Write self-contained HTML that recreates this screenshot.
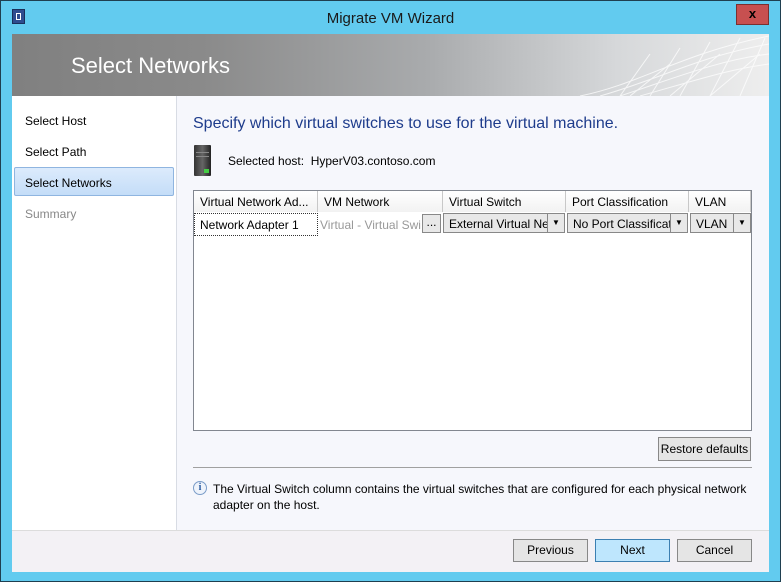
<!DOCTYPE html><html><head><style>
*{margin:0;padding:0;box-sizing:border-box}
body{width:781px;height:582px;background:#62cbef;font-family:"Liberation Sans",sans-serif;font-size:12px;color:#000;position:relative;overflow:hidden}
.a{position:absolute}
.hdr{left:12px;top:34px;width:757px;height:62px;background:linear-gradient(90deg,#808080 0%,#8a8a8a 25%,#a9abad 55%,#d6d8da 80%,#eeeeee 100%)}
.nav div{position:absolute;left:13px;font-size:12px}
.th{position:absolute;top:0;height:21px;border-right:1px solid #c8c8c8;padding:4px 6px;background:linear-gradient(#fff,#f2f2f2);white-space:nowrap;overflow:hidden}
.cb{position:absolute;top:2px;height:20px;border:1px solid #888;background:#e8e8e8;padding:3px 5px;white-space:nowrap;overflow:hidden}
.dd{position:absolute;right:0;top:0;width:17px;height:18px;border-left:1px solid #888;background:#e8e8e8;font-size:8px;text-align:center;line-height:18px}
.btn{position:absolute;top:539px;height:23px;width:75px;border:1px solid #888;background:#e5e5e5;text-align:center;line-height:21px}
</style></head><body>
<div class="a" style="left:0;top:0;width:781px;height:582px;border:1px solid #1f3f50"></div>
<div class="a" style="left:12px;top:9px;width:13px;height:15px;background:#2e4d8f;border:1px solid #1a2f5a"><div style="margin:3px 3px;width:5px;height:7px;border:1px solid #fff"></div></div>
<div class="a" style="left:0;top:10px;width:781px;text-align:center;font-size:15px;color:#1a1a1a">Migrate VM Wizard</div>
<div class="a" style="left:736px;top:4px;width:33px;height:21px;background:#c75050;border:1px solid #7a3030;color:#000;font-weight:bold;text-align:center;line-height:18px;font-size:13px">x</div>
<div class="a hdr"></div>
<svg class="a" style="left:560px;top:34px" width="209" height="62"><g stroke="#fff" stroke-width="1" fill="none" opacity=".75"><path d="M20 62 C80 50,120 20,209 2"/><path d="M40 62 C100 45,140 22,209 10"/><path d="M60 62 C120 42,160 26,209 20"/><path d="M80 62 C140 45,170 35,209 30"/><path d="M60 62 L90 20 M90 62 L120 14 M120 62 L150 8 M150 62 L180 4 M180 62 L205 4"/><path d="M70 62 L110 30 M110 62 L160 20 M150 62 L200 20"/></g></svg>
<div class="a" style="left:71px;top:53px;font-size:22px;color:#fff">Select Networks</div>
<div class="a" style="left:12px;top:96px;width:165px;height:435px;background:#fff;border-right:1px solid #d8dce4"></div>
<div class="a" style="left:177px;top:96px;width:592px;height:435px;background:#f6f7fc"></div>
<div class="a" style="left:14px;top:167px;width:160px;height:29px;background:linear-gradient(#dcebfc,#c4ddf8);border:1px solid #8fb5e0;border-radius:2px"></div>
<div class="nav"><div style="left:25px;top:114px">Select Host</div><div style="left:25px;top:145px">Select Path</div><div style="left:25px;top:176px">Select Networks</div><div style="left:25px;top:207px;color:#888">Summary</div></div>
<div class="a" style="left:193px;top:115px;font-size:16px;color:#1e3c8c">Specify which virtual switches to use for the virtual machine.</div>
<div class="a" style="left:194px;top:145px;width:17px;height:31px;background:linear-gradient(90deg,#333,#666,#222);border-radius:1px"><div style="position:absolute;left:2px;top:7px;width:13px;height:1px;background:#888"></div><div style="position:absolute;left:2px;top:11px;width:13px;height:1px;background:#888"></div><div style="position:absolute;left:10px;top:24px;width:5px;height:4px;background:#4c4"></div></div>
<div class="a" style="left:228px;top:154px">Selected host:&nbsp; HyperV03.contoso.com</div>
<div class="a" style="left:193px;top:190px;width:559px;height:241px;background:#fff;border:1px solid #828790"></div>
<div class="a" style="left:194px;top:191px;width:557px;height:21px">
<div class="th" style="left:0;width:124px">Virtual Network Ad...</div>
<div class="th" style="left:124px;width:125px">VM Network</div>
<div class="th" style="left:249px;width:123px">Virtual Switch</div>
<div class="th" style="left:372px;width:123px">Port Classification</div>
<div class="th" style="left:495px;width:62px">VLAN</div>
</div>
<div class="a" style="left:194px;top:213px;width:124px;height:23px;border:1px dotted #333;padding:4px 5px">Network Adapter 1</div>
<div class="a" style="left:320px;top:218px;color:#999">Virtual - Virtual Swi</div>
<div class="a" style="left:422px;top:214px;width:19px;height:19px;border:1px solid #888;background:#e8e8e8;text-align:center;line-height:14px">...</div>
<div class="cb" style="left:443px;top:213px;width:122px">External Virtual Ne<div class="dd">▼</div></div>
<div class="cb" style="left:567px;top:213px;width:121px">No Port Classificat<div class="dd">▼</div></div>
<div class="cb" style="left:690px;top:213px;width:61px">VLAN<div class="dd">▼</div></div>
<div class="a" style="left:658px;top:437px;width:93px;height:24px;border:1px solid #888;background:#e5e5e5;text-align:center;line-height:22px">Restore defaults</div>
<div class="a" style="left:193px;top:467px;width:559px;height:1px;background:#a0a0a0"></div>
<div class="a" style="left:193px;top:481px;width:14px;height:14px;border-radius:50%;border:1px solid #7a9cc8;background:#eef3fb;font-size:10px;font-weight:bold;color:#2a5aa0;text-align:center;line-height:12px;font-family:'Liberation Serif',serif">i</div>
<div class="a" style="left:213px;top:481px;width:545px;line-height:16px">The Virtual Switch column contains the virtual switches that are configured for each physical network adapter on the host.</div>
<div class="a" style="left:12px;top:530px;width:757px;height:42px;background:#f3f1f5;border-top:1px solid #dcdcdc"></div>
<div class="btn" style="left:513px">Previous</div>
<div class="btn" style="left:595px;background:#bee6fd;border-color:#3c7fb1">Next</div>
<div class="btn" style="left:677px">Cancel</div>
</body></html>
